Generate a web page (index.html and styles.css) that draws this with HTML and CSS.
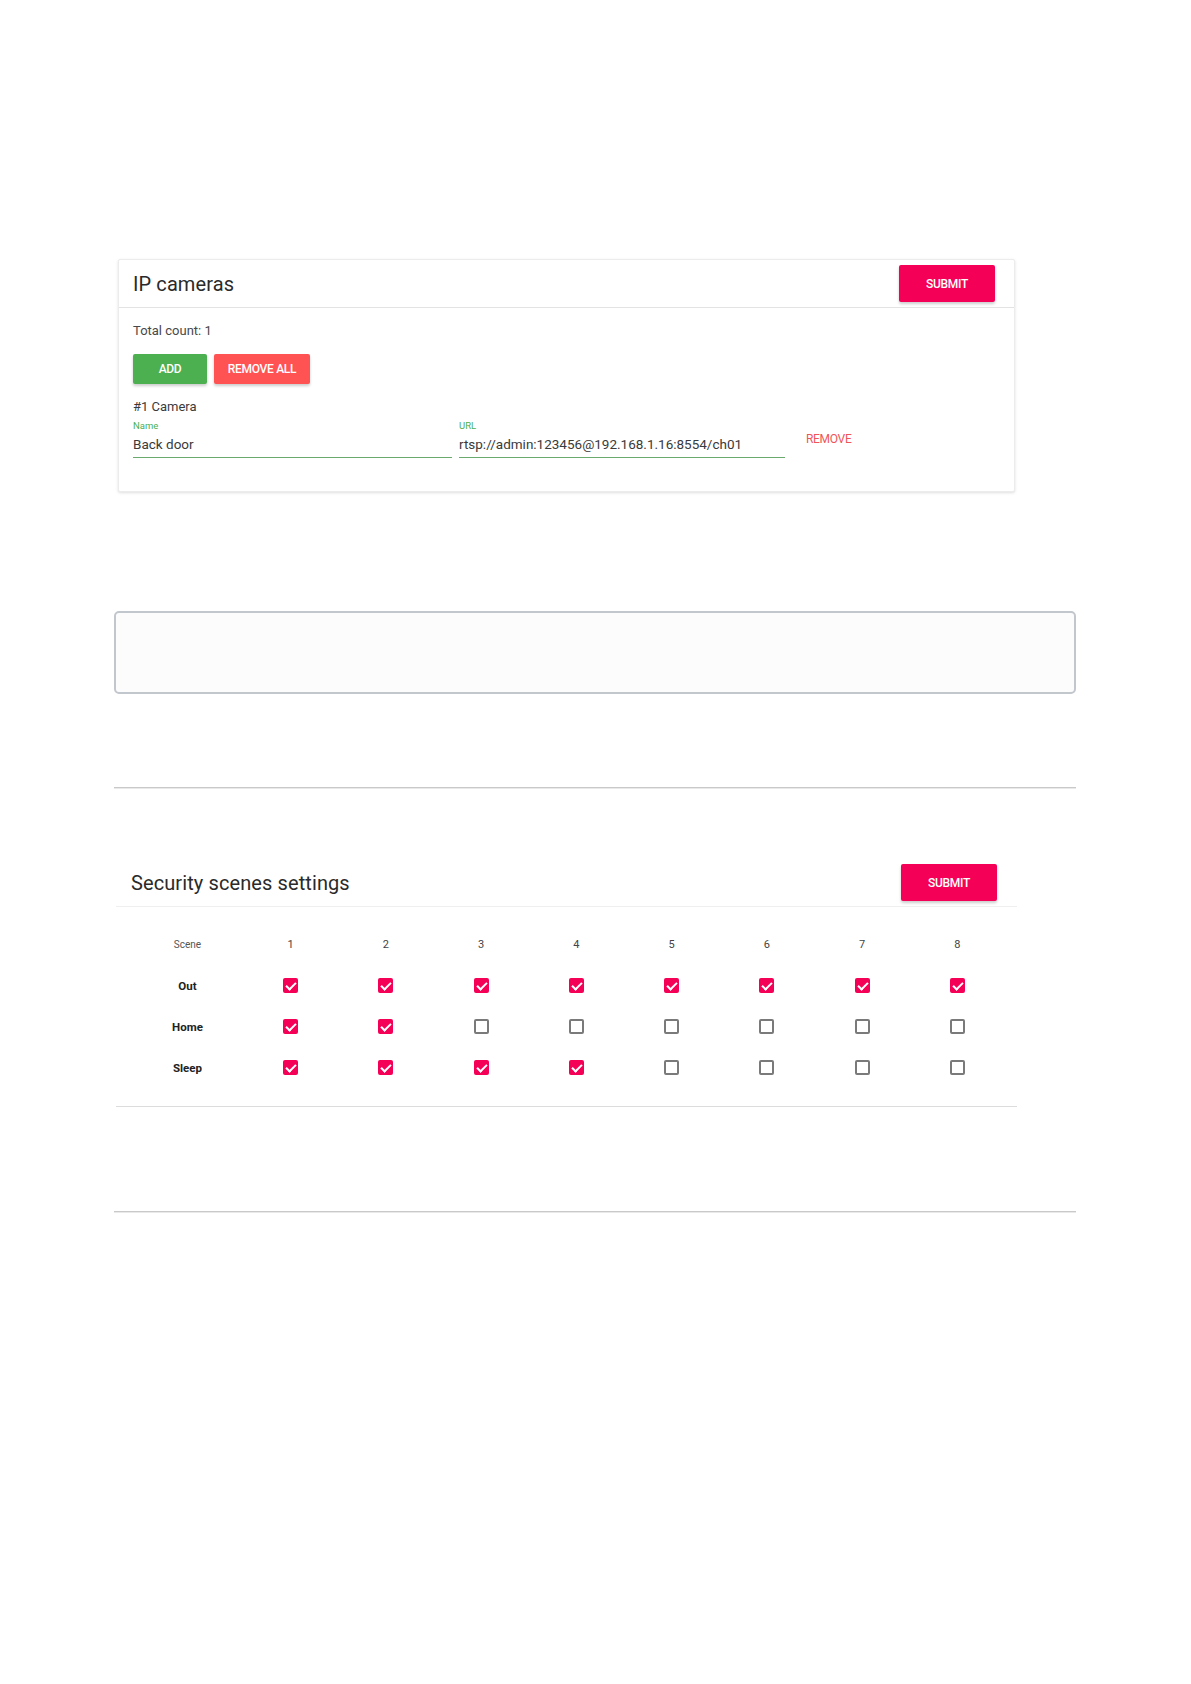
FILE: index.html
```html
<!DOCTYPE html>
<html lang="en">
<head>
<meta charset="utf-8">
<title>Settings</title>
<link rel="stylesheet" href="styles.css">
</head>
<body>
<div class="page">
  <section class="card">
    <div class="card-head">
      <h2 class="title">IP cameras</h2>
      <button class="btn btn-pink">SUBMIT</button>
    </div>
    <div class="card-body">
      <div class="total">Total count: 1</div>
      <div class="actions">
        <button class="btn btn-green btn-add">ADD</button>
        <button class="btn btn-red btn-removeall">REMOVE ALL</button>
      </div>
      <div class="cam-title">#1 Camera</div>
      <div class="fields">
        <div class="field field-name">
          <label class="field-label">Name</label>
          <div class="field-input">Back door</div>
        </div>
        <div class="field field-url">
          <label class="field-label">URL</label>
          <div class="field-input">rtsp://admin:123456@192.168.1.16:8554/ch01</div>
        </div>
        <button class="link-remove">REMOVE</button>
      </div>
    </div>
  </section>

  <div class="textbox"></div>

  <div class="rule rule-1"></div>

  <section class="scenes">
    <div class="scenes-head">
      <h2 class="title">Security scenes settings</h2>
      <button class="btn btn-pink btn-submit2">SUBMIT</button>
    </div>
    <div class="scene-table">
      <div class="cell head-label">Scene</div>
      <div class="cell num">1</div><div class="cell num">2</div><div class="cell num">3</div><div class="cell num">4</div>
      <div class="cell num">5</div><div class="cell num">6</div><div class="cell num">7</div><div class="cell num">8</div>

      <div class="cell row-label">Out</div>
      <div class="cell"><span class="cb on"></span></div><div class="cell"><span class="cb on"></span></div>
      <div class="cell"><span class="cb on"></span></div><div class="cell"><span class="cb on"></span></div>
      <div class="cell"><span class="cb on"></span></div><div class="cell"><span class="cb on"></span></div>
      <div class="cell"><span class="cb on"></span></div><div class="cell"><span class="cb on"></span></div>

      <div class="cell row-label">Home</div>
      <div class="cell"><span class="cb on"></span></div><div class="cell"><span class="cb on"></span></div>
      <div class="cell"><span class="cb"></span></div><div class="cell"><span class="cb"></span></div>
      <div class="cell"><span class="cb"></span></div><div class="cell"><span class="cb"></span></div>
      <div class="cell"><span class="cb"></span></div><div class="cell"><span class="cb"></span></div>

      <div class="cell row-label">Sleep</div>
      <div class="cell"><span class="cb on"></span></div><div class="cell"><span class="cb on"></span></div>
      <div class="cell"><span class="cb on"></span></div><div class="cell"><span class="cb on"></span></div>
      <div class="cell"><span class="cb"></span></div><div class="cell"><span class="cb"></span></div>
      <div class="cell"><span class="cb"></span></div><div class="cell"><span class="cb"></span></div>
    </div>
  </section>

  <div class="rule rule-2"></div>
</div>
</body>
</html>
```

FILE: styles.css
```css
* { box-sizing: border-box; }
html, body { margin: 0; padding: 0; background: #ffffff; }
body {
  font-family: Roboto, "Liberation Sans", Arial, sans-serif;
  color: #333333;
  width: 1191px;
  height: 1684px;
}
.page {
  width: 962px;
  margin-left: 114px;
  padding-top: 259px;
}
button { font-family: inherit; cursor: pointer; }

.card {
  margin-left: 4px;
  width: 897px;
  border: 1px solid #ececec;
  border-radius: 2px;
  box-shadow: 0 1px 3px rgba(0,0,0,0.13);
  background: #fff;
}
.card-head, .scenes-head {
  display: flex;
  align-items: center;
  justify-content: space-between;
  height: 48px;
  padding: 0 19px 0 14px;
  border-bottom: 1px solid #e3e3e3;
}
.title {
  margin: 0;
  font-size: 20px;
  font-weight: 400;
  color: #2a2a2a;
  letter-spacing: 0.1px;
}
.btn {
  border: none;
  color: #fff;
  font-size: 12px;
  font-weight: 500;
  letter-spacing: -0.3px;
  border-radius: 2px;
  box-shadow: 0 2px 3px rgba(0,0,0,0.2);
  padding: 0;
}
.btn-pink {
  background: #f50057;
  width: 96px;
  height: 37px;
}
.btn-green { background: #4caf50; }
.btn-red { background: #ff5252; }

.card-body {
  padding: 15px 14px 33px 14px;
}
.total {
  font-size: 13px;
  line-height: 16px;
  color: #484848;
}
.actions {
  display: flex;
  gap: 7px;
  margin-top: 15px;
}
.btn-add { width: 74px; height: 30px; }
.btn-removeall { width: 96px; height: 30px; }
.cam-title {
  margin-top: 15px;
  font-size: 13px;
  line-height: 16px;
  color: #3a3a3a;
}
.fields {
  display: flex;
  align-items: center;
  margin-top: 5px;
}
.field {
  display: flex;
  flex-direction: column;
}
.field-name { width: 319px; }
.field-url { width: 326px; margin-left: 7px; }
.field-label {
  font-size: 9.5px;
  line-height: 12px;
  color: #4caf50;
}
.field-input {
  font-size: 13.5px;
  line-height: 18px;
  padding: 3px 0 4px 0;
  border-bottom: 1px solid #6aaa6c;
  color: #3a3a3a;
  white-space: nowrap;
}
.link-remove {
  background: none;
  border: none;
  padding: 0;
  margin-left: 21px;
  font-size: 12px;
  color: #f0555a;
  letter-spacing: -0.3px;
}

.textbox {
  margin-top: 119px;
  height: 83px;
  border: 2px solid #c2c6cd;
  border-radius: 5px;
  background: #fcfcfd;
}

.rule {
  height: 2px;
  border-top: 1px solid #c9c9c9;
  border-bottom: 1px solid #e9e9e9;
}
.rule-1 { margin-top: 93px; }
.rule-2 { margin-top: 104px; }

.scenes {
  margin-top: 70px;
  margin-left: 2px;
  width: 901px;
  border-bottom: 1px solid #dcdcdc;
}
.scenes-head {
  padding: 0 20px 0 15px;
  border-bottom: 1px solid #efefef;
}
.scene-table {
  display: grid;
  grid-template-columns: 111px repeat(8, 95.25px);
  grid-auto-rows: 41px;
  padding: 17px 0 18px 16px;
}
.cell {
  display: flex;
  align-items: center;
  justify-content: center;
}
.head-label {
  font-size: 10px;
  color: #555;
}
.num {
  font-size: 11px;
  color: #444;
}
.row-label {
  font-size: 11.5px;
  font-weight: 700;
  color: #222;
}
.cb {
  width: 15px;
  height: 15px;
  border: 2px solid #7a7a7a;
  border-radius: 2px;
  display: block;
  position: relative;
}
.cb.on {
  border: none;
  background: #f50057;
}
.cb.on::after {
  content: "";
  position: absolute;
  left: 5px;
  top: 2px;
  width: 4px;
  height: 8px;
  border-right: 2px solid #fff;
  border-bottom: 2px solid #fff;
  transform: rotate(45deg);
}
```
